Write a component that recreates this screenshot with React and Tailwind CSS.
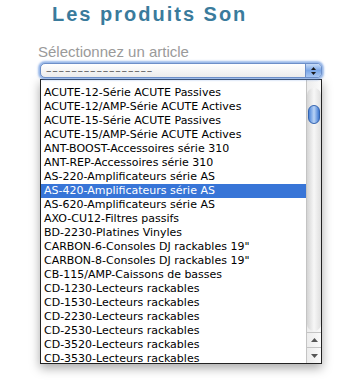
import React from 'react';

const items = [
    'ACUTE-10/AMP-Série ACUTE Actives',
    'ACUTE-12-Série ACUTE Passives',
    'ACUTE-12/AMP-Série ACUTE Actives',
    'ACUTE-15-Série ACUTE Passives',
    'ACUTE-15/AMP-Série ACUTE Actives',
    'ANT-BOOST-Accessoires série 310',
    'ANT-REP-Accessoires série 310',
    'AS-220-Amplificateurs série AS',
    'AS-420-Amplificateurs série AS',
    'AS-620-Amplificateurs série AS',
    'AXO-CU12-Filtres passifs',
    'BD-2230-Platines Vinyles',
    'CARBON-6-Consoles DJ rackables 19"',
    'CARBON-8-Consoles DJ rackables 19"',
    'CB-115/AMP-Caissons de basses',
    'CD-1230-Lecteurs rackables',
    'CD-1530-Lecteurs rackables',
    'CD-2230-Lecteurs rackables',
    'CD-2530-Lecteurs rackables',
    'CD-3520-Lecteurs rackables',
    'CD-3530-Lecteurs rackables',
];

const selected = 'AS-420-Amplificateurs série AS';

const Triangle = ({ down, className }) => (
    <svg width="7" height="4" viewBox="0 0 7 4" className={className}>
        <polygon points={down ? '0,0 7,0 3.5,4' : '3.5,0 7,4 0,4'} fill="currentColor" />
    </svg>
);

const App = () => {
    return (
        <div className="w-[350px] h-[382px] bg-white overflow-hidden font-['Liberation_Sans',Arial,sans-serif]">
            <h1 className="pl-[52px] pt-[2px] text-[20px] leading-[24px] font-bold tracking-[2px] text-[#3a7b9c]">
                Les produits Son
            </h1>
            <p className="mt-[17px] pl-[38px] text-[15px] leading-[18px] text-[#9a9a9a]">Sélectionnez un article</p>

            {/* select box with focus glow */}
            <div className="relative z-10 ml-[39px] mt-[1px] w-[284px] h-[17px] rounded-[6px] bg-[#9dbbe9] p-[1px] shadow-[0_0_2px_1px_rgba(90,140,220,0.6)]">
                <div className="flex h-full rounded-[5px] border border-[#6d8fc8] bg-gradient-to-b from-white to-[#ececec] overflow-hidden">
                    <div className="flex-1 pl-[5px] text-[11px] leading-[13px] tracking-[0.8px] text-[#555] font-['DejaVu_Sans',sans-serif]">
                        –––––––––––––––––
                    </div>
                    <div className="w-[16px] flex flex-col items-center justify-center gap-[2px] border-l border-[#6d8fc8] bg-gradient-to-b from-[#c9dcf6] via-[#7aa6e6] to-[#a9c7f2] text-[#1a1a1a]">
                        <Triangle className="w-[5px] h-[3px]" />
                        <Triangle down className="w-[5px] h-[3px]" />
                    </div>
                </div>
            </div>

            {/* dropdown list */}
            <div className="ml-[40px] w-[282px] h-[285px] border border-[#222] bg-white shadow-[0_4px_10px_rgba(0,0,0,0.35)] flex overflow-hidden">
                <div className="flex-1 overflow-hidden">
                    <div className="-mt-[8px] flex flex-col font-['DejaVu_Sans',sans-serif] text-[11px]">
                        {items.map((item, i) => (
                            <div
                                key={item}
                                className={`h-[14px] leading-[14px] pl-[3px] whitespace-nowrap overflow-hidden ${item === selected ? 'bg-[#3875d7] text-white' : 'text-black'}`}
                            >
                                {i === 0 ? <span className="relative -top-[4px]">{item}</span> : item}
                            </div>
                        ))}
                    </div>
                </div>
                <div className="w-[15px] flex flex-col border-l border-[#c4c4c4] bg-gradient-to-r from-[#ececec] to-[#fafafa]">
                    <div className="h-[8px]" />
                    <div className="flex-1 rounded-[7px] bg-gradient-to-r from-[#d4d4d4] via-[#f7f7f7] to-[#dedede] px-[1px] pt-[17px]">
                        <div className="h-[19px] rounded-full border border-[#3464b0] bg-gradient-to-r from-[#4f86d8] via-[#b9d3f6] to-[#3f78d0]" />
                    </div>
                    <div className="h-[15px] mt-[1px] border-t border-[#c4c4c4] flex items-center justify-center text-[#555]">
                        <Triangle />
                    </div>
                    <div className="h-[16px] border-t border-[#c4c4c4] flex items-center justify-center text-[#555]">
                        <Triangle down />
                    </div>
                </div>
            </div>
        </div>
    );
};

export default App;
